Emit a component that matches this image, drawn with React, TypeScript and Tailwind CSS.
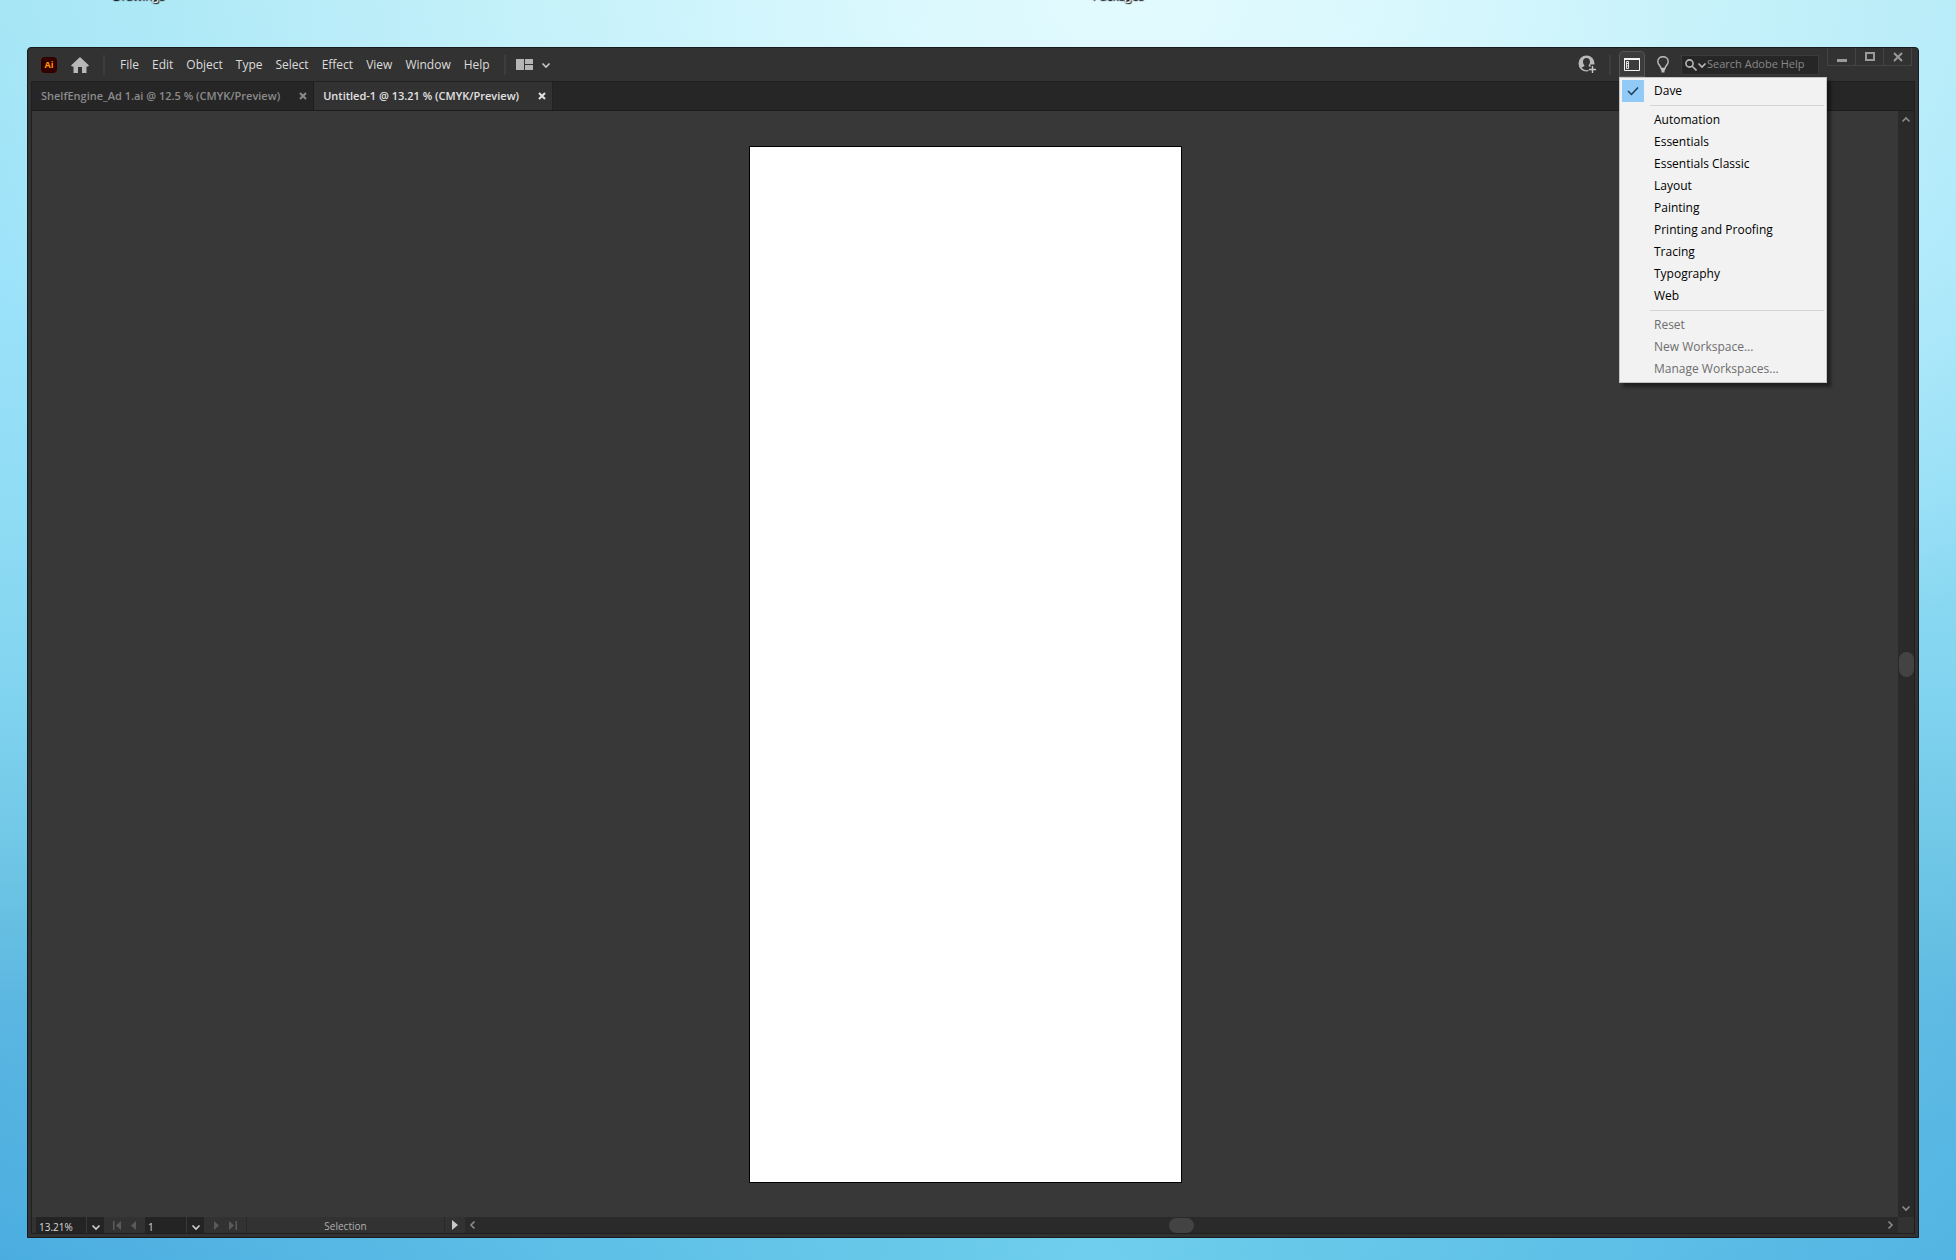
import type { ReactNode } from "react";

const menus = ["File", "Edit", "Object", "Type", "Select", "Effect", "View", "Window", "Help"];
const workspaces = [
  "Automation",
  "Essentials",
  "Essentials Classic",
  "Layout",
  "Painting",
  "Printing and Proofing",
  "Tracing",
  "Typography",
  "Web",
];
const actions = ["Reset", "New Workspace...", "Manage Workspaces..."];

type Dir = "up" | "down" | "left" | "right";
const chevrons: Record<Dir, string> = {
  up: "M1.5 6.5 5 3l3.5 3.5",
  down: "M1.5 3.5 5 7l3.5-3.5",
  left: "M6.5 1.5 3 5l3.5 3.5",
  right: "M3.5 1.5 7 5 3.5 8.5",
};

function Chevron({ dir }: { dir: Dir }) {
  return (
    <svg viewBox="0 0 10 10" className="size-[10px] shrink-0" fill="none" stroke="currentColor" strokeWidth="1.6" aria-hidden="true">
      <path d={chevrons[dir]} />
    </svg>
  );
}

function Divider() {
  return <div className="h-5 w-[2px] shrink-0 bg-[#3d3d3d]" />;
}

function Tab({ title, active }: { title: string; active?: boolean }) {
  return (
    <div
      className={
        active
          ? "flex h-full items-center gap-[19px] border-r border-[#222] bg-[#323232] pr-[6px] pl-[9px] text-[#e2e2e2]"
          : "flex h-full items-center gap-[19px] border-r border-[#1e1e1e] pr-[6px] pl-[9px] text-[#8b8b8b]"
      }
    >
      <button className="text-[11px] leading-4 font-semibold">{title}</button>
      <button aria-label={"Close " + title}>
        <svg viewBox="0 0 8 8" className="size-2" stroke="currentColor" strokeWidth="2" aria-hidden="true">
          <path d="M1 1l6 6M7 1L1 7" />
        </svg>
      </button>
    </div>
  );
}

function MenuItem({ label, checked, disabled }: { label: string; checked?: boolean; disabled?: boolean }) {
  return (
    <button
      role="menuitem"
      disabled={disabled}
      className="flex h-[22px] w-full items-center gap-[10px] text-left text-[12px] text-black disabled:text-[#6d6d6d]"
    >
      <span className={checked ? "grid size-[22px] place-items-center bg-[#91c9f7]" : "size-[22px]"}>
        {checked && (
          <svg viewBox="0 0 12 10" className="h-[10px] w-3" fill="none" stroke="#1f3b52" strokeWidth="1.5" aria-hidden="true">
            <path d="M1 5l3.5 3.5L11 1.5" />
          </svg>
        )}
      </span>
      {label}
    </button>
  );
}

function WindowButton({ label, children }: { label: string; children: ReactNode }) {
  return (
    <button aria-label={label} className="grid h-[18px] w-7 place-items-center border-r border-b border-[#444] text-[#9a9a9a]">
      {children}
    </button>
  );
}

function StatusField({ label, value, className }: { label: string; value: string; className: string }) {
  return (
    <div className={"flex h-full " + className}>
      <input aria-label={label} defaultValue={value} className="h-full w-full min-w-0 flex-1 bg-[#242424] pt-1 pl-[3px] text-[10px] text-[#dadada]" />
      <button aria-label={label + " options"} className="grid w-[18px] shrink-0 place-items-center border-l border-[#3a3a3a] bg-[#242424] pt-1 text-[#d0d0d0]">
        <Chevron dir="down" />
      </button>
    </div>
  );
}

export default function App() {
  return (
    <div className="relative flex h-screen flex-col overflow-hidden bg-[linear-gradient(to_bottom,#a1e4f4_0%,#9de3fa_20%,#90dcf5_40%,#80d3ef_56%,#6cc4e4_70%,#5bb6e1_80%,#49ace0_100%)] pt-[47px] pr-[37px] pb-[22px] pl-[27px] font-['Open_Sans','Noto_Sans',sans-serif]">
      <div className="absolute inset-0 bg-[radial-gradient(ellipse_58%_60%_at_56%_100%,#6fceecff_0%,#6fceec00_100%),radial-gradient(ellipse_62%_65%_at_58%_0%,#e2fafeff_0%,#defafeee_20%,#d4f6fd00_100%)]" />
      <div className="absolute -top-3 left-[112px] text-[12px] leading-4 text-white [text-shadow:1px_1px_1px_#000,0_0_2px_#333]">Drawings</div>
      <div className="absolute -top-3 left-[1092px] text-[12px] leading-4 text-white [text-shadow:1px_1px_1px_#000,0_0_2px_#333]">Packages</div>

      <main className="relative flex min-h-0 flex-1 flex-col rounded-t border border-[#191c1e] bg-[#323232] px-[3px] pb-[3px]">
        <header className="flex h-[33px] shrink-0 items-center pl-[10px]">
          <span className="grid size-4 place-items-center rounded-sm bg-[#330000] text-[9px] leading-3 font-bold text-[#ff9a00]">Ai</span>
          <button aria-label="Home" className="mx-[14px]">
            <svg viewBox="0 0 18 16" className="h-4 w-[18px]" fill="#b8b8b8" aria-hidden="true">
              <path d="M9 0 0 8.5 1 9.5h1.5V16H7v-6h4v6h4.5V9.5H17l1-1z" />
            </svg>
          </button>
          <Divider />
          <nav className="mr-[14px] ml-[15px] flex gap-[13px]">
            {menus.map((m) => (
              <button key={m} className="text-[12px] leading-5 text-[#dcdcdc]">{m}</button>
            ))}
          </nav>
          <Divider />
          <button aria-label="Arrange documents" className="ml-[10px] flex items-center gap-2 text-[#c8c8c8]">
            <svg viewBox="0 0 17 11" className="h-[11px] w-[17px]" fill="#b5b5b5" aria-hidden="true">
              <path d="M0 0h8v11H0zM9 0h8v5H9zM9 6h8v5H9z" />
            </svg>
            <Chevron dir="down" />
          </button>

          <div className="ml-auto flex h-full items-center">
            <button aria-label="Account">
              <svg viewBox="0 0 19 19" className="size-[19px]" aria-hidden="true">
                <path fillRule="evenodd" d="M8.5.5a8 8 0 1 1 0 16 8 8 0 0 1 0-16zM8.5 3C6.300 3 5 4.500 5 6.700c0 1.500.6 2.600 1.300 3.300v1.200L3.500 12.600C4.800 14.300 6.500 15.200 8.500 15.200s3.700-.9 5-2.600l-2.800-1.400V10C11.400 9.300 12 8.200 12 6.700 12 4.500 10.700 3 8.500 3z" fill="#b9b9b9" />
                <path d="M12.500 9.500H19V19h-8.500v-6.500h2z" fill="#323232" />
                <path d="M14.500 11v7M11 14.500h7" stroke="#c8c8c8" strokeWidth="1.4" />
              </svg>
            </button>
            <div className="mr-2 ml-3">
              <Divider />
            </div>
            <div className="relative self-start pt-[3px]">
              <button aria-label="Switch workspace" aria-expanded="true" className="grid h-[26px] w-[26px] place-items-center rounded-t-sm border border-[#555] bg-[#3c3c3c]">
                <svg viewBox="0 0 16 13" className="h-[13px] w-4" fill="none" stroke="#f2f2f2" aria-hidden="true">
                  <path d="M.5.5h15v12H.5z" />
                  <path d="M0 1h16" strokeWidth="2" />
                  <path d="M2.5 3.5h2v7h-2zM2.5 5.5h2M2.5 8h2" strokeWidth=".9" />
                </svg>
              </button>
              <div role="menu" className="absolute top-full left-0 z-10 w-[208px] border border-[#c4c4c4] bg-[#f2f2f2] p-[2px] shadow-[4px_4px_3px_rgba(0,0,0,0.4)]">
                <MenuItem label="Dave" checked />
                <hr className="my-[3px] ml-7 border-[#d4d4d4]" />
                {workspaces.map((w) => (
                  <MenuItem key={w} label={w} />
                ))}
                <hr className="my-[3px] ml-7 border-[#d4d4d4]" />
                {actions.map((a) => (
                  <MenuItem key={a} label={a} disabled />
                ))}
              </div>
            </div>
            <button aria-label="Learn" className="mx-3">
              <svg viewBox="0 0 12 17" className="h-[17px] w-3" fill="none" stroke="#bdbdbd" strokeWidth="1.4" aria-hidden="true">
                <path d="M4 12.500c0-2.500-3.200-3.700-3.200-7C.8 2.700 3 .8 6 .8s5.200 1.900 5.200 4.700c0 3.300-3.200 4.500-3.200 7z" />
                <path d="M4 13.500h4M4.500 15.500h3" strokeWidth="2" />
              </svg>
            </button>
            <label className="flex h-5 w-[138px] items-center border border-[#3a3a3a] bg-[#262626] pl-[3px] text-[#b8b8b8]">
              <svg viewBox="0 0 12 12" className="size-3 shrink-0" fill="none" stroke="currentColor" strokeWidth="1.6" aria-hidden="true">
                <circle cx="4.5" cy="4.5" r="3.6" />
                <path d="M7.2 7.2 11.5 11.5" />
              </svg>
              <Chevron dir="down" />
              <input aria-label="Search Adobe Help" placeholder="Search Adobe Help" className="w-full min-w-0 text-[11px] placeholder:text-[#888]" />
            </label>
            <div className="mr-[3px] ml-2 flex self-start border-l border-[#444]">
              <WindowButton label="Minimize">
                <svg viewBox="0 0 10 10" className="size-[10px]" aria-hidden="true">
                  <path d="M0 8.5h10" stroke="currentColor" strokeWidth="3" />
                </svg>
              </WindowButton>
              <WindowButton label="Maximize">
                <svg viewBox="0 0 10 9" className="h-[9px] w-[10px]" fill="none" stroke="currentColor" strokeWidth="2" aria-hidden="true">
                  <path d="M1 1h8v7H1z" />
                </svg>
              </WindowButton>
              <WindowButton label="Close">
                <svg viewBox="0 0 10 10" className="size-[10px]" stroke="currentColor" strokeWidth="2" aria-hidden="true">
                  <path d="M1 1l8 8M9 1L1 9" />
                </svg>
              </WindowButton>
            </div>
          </div>
        </header>

        <section className="flex min-h-0 flex-1 flex-col border border-[#1f1f1f] bg-[#383838]">
          <div className="flex h-[29px] shrink-0 items-center border-b border-[#1c1c1c] bg-[#262626]">
            <Tab title="ShelfEngine_Ad 1.ai @ 12.5 % (CMYK/Preview)" />
            <Tab title="Untitled-1 @ 13.21 % (CMYK/Preview)" active />
          </div>
          <div className="flex min-h-0 flex-1">
            <div className="flex flex-1 justify-center pt-[35px] pb-[34px]">
              <div className="w-[433px] border border-black bg-white" />
            </div>
            <div className="flex w-4 shrink-0 flex-col items-center justify-between bg-[#2a2a2a] py-1 text-[#8c8c8c]">
              <Chevron dir="up" />
              <div className="h-[25px] w-[15px] rounded-full bg-[#434343]" />
              <Chevron dir="down" />
            </div>
          </div>
          <footer className="flex h-4 shrink-0 items-center bg-[#323232]">
            <StatusField label="Zoom" value="13.21%" className="ml-1 w-[68px]" />
            <div className="flex w-[41px] items-center justify-center gap-[10px] text-[#5a5a5a]">
              <button aria-label="First artboard">
                <svg viewBox="0 0 8 9" className="h-[9px] w-2" fill="currentColor" aria-hidden="true">
                  <path d="M0 0h1.5v9H0zM8 0v9L3 4.5z" />
                </svg>
              </button>
              <button aria-label="Previous artboard">
                <svg viewBox="0 0 5 9" className="h-[9px] w-[5px]" fill="currentColor" aria-hidden="true">
                  <path d="M5 0v9L0 4.5z" />
                </svg>
              </button>
            </div>
            <StatusField label="Artboard" value="1" className="w-[59px]" />
            <div className="flex w-[42px] items-center justify-center gap-[10px] text-[#5a5a5a]">
              <button aria-label="Next artboard">
                <svg viewBox="0 0 5 9" className="h-[9px] w-[5px]" fill="currentColor" aria-hidden="true">
                  <path d="M0 0v9l5-4.5z" />
                </svg>
              </button>
              <button aria-label="Last artboard">
                <svg viewBox="0 0 8 9" className="h-[9px] w-2" fill="currentColor" aria-hidden="true">
                  <path d="M6.5 0H8v9H6.5zM0 0v9l5-4.5z" />
                </svg>
              </button>
            </div>
            <div className="h-full w-[199px] border-x border-[#292929] pt-[2px] text-center text-[10px] leading-[14px] text-[#b0b0b0]">Selection</div>
            <button aria-label="Status options" className="grid h-full w-5 place-items-center">
              <svg viewBox="0 0 6 10" className="h-[10px] w-[6px]" fill="#c8c8c8" aria-hidden="true">
                <path d="M0 0v10l6-5z" />
              </svg>
            </button>
            <div className="flex h-full flex-1 items-center justify-between bg-[#2a2a2a] px-[3px] text-[#8c8c8c]">
              <Chevron dir="left" />
              <div className="h-[15px] w-[25px] rounded-full bg-[#434343]" />
              <Chevron dir="right" />
            </div>
            <div className="w-4" />
          </footer>
        </section>
      </main>
    </div>
  );
}
